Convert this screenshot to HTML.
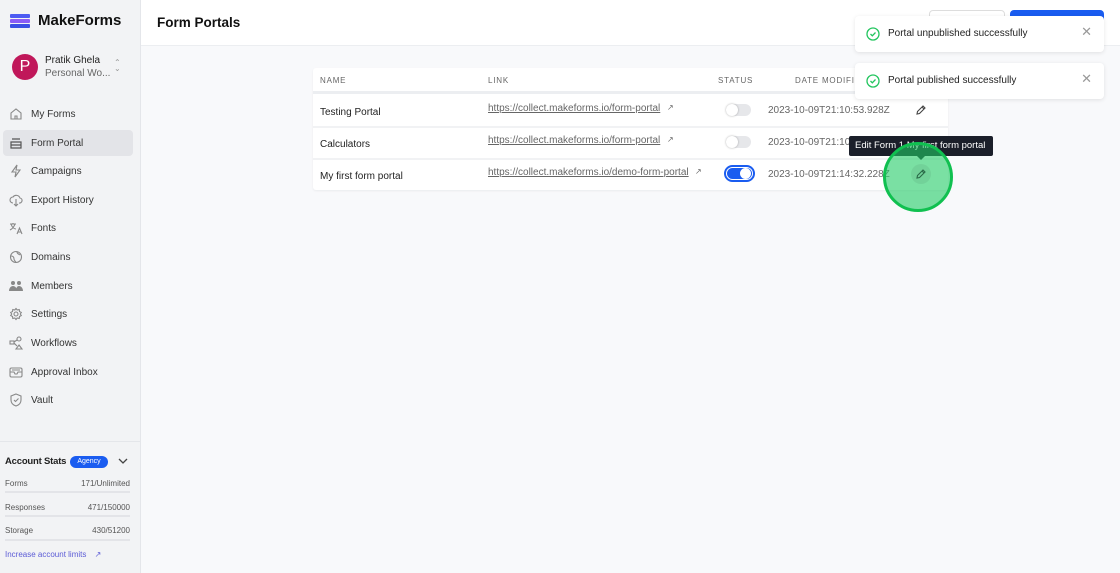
<!DOCTYPE html>
<html><head><meta charset="utf-8"><style>
*{box-sizing:border-box;margin:0;padding:0}
body{width:1120px;height:573px;overflow:hidden;font-family:"Liberation Sans",sans-serif;background:#f8f9fb;position:relative;color:#222}
.sb{position:absolute;left:0;top:0;width:141px;height:573px;background:#f2f3f5;border-right:1px solid #e4e6ea}
.logo{position:absolute;left:10px;top:12px;display:flex;align-items:center;font-weight:bold;font-size:15px;color:#111}
.av{position:absolute;left:12px;top:54px;width:26px;height:26px;border-radius:50%;background:#c0175a;color:#fff;font-size:16px;text-align:center;line-height:26px}
.nm{position:absolute;left:45px;top:55px;font-size:10px;color:#222}
.ws{position:absolute;left:45px;top:68px;font-size:10px;color:#666}
.nav{position:absolute;left:3px;width:130px;height:26px;font-size:10px;color:#333;display:flex;align-items:center}
.nav svg{position:absolute;left:6px;width:14px;height:14px}
.nav span{position:absolute;left:28px}
.act{background:#e3e4e8;border-radius:4px}
.hdr{position:absolute;left:141px;top:0;right:0;height:46px;background:#fff;border-bottom:1px solid #eceef1}
.title{position:absolute;left:157px;top:15px;font-size:13.5px;font-weight:bold;color:#111}
.tbl{position:absolute;left:313px;top:68px;width:635px;height:122px;background:#fff;border-radius:3px;box-shadow:0 1px 2px rgba(0,0,0,.06)}
.th{position:absolute;top:76px;font-size:8px;letter-spacing:.8px;color:#666}
.row{position:absolute;left:313px;width:635px;height:32px;border-top:2px solid #f1f2f4}
.txt{position:absolute;font-size:10px;color:#222}
.lnk{position:absolute;font-size:10px;color:#666;text-decoration:underline}
.dt{position:absolute;left:768px;font-size:10px;color:#666}
.tg{position:absolute;left:726px;width:25px;height:12px;border-radius:6px;background:#e6e7ea}
.tg:after{content:"";position:absolute;left:0;top:0;width:12px;height:12px;border-radius:50%;background:#fff;box-shadow:0 0 2px rgba(0,0,0,.3)}
.toast{position:absolute;left:855px;width:249px;height:36px;background:#fff;border-radius:4px;box-shadow:0 1px 4px rgba(0,0,0,.1);font-size:10px;color:#222}
.toast svg{position:absolute;left:11px;top:11px}
.toast span{position:absolute;left:33px;top:12px}
.toast b{position:absolute;right:12px;top:8px;font-weight:normal;color:#999;font-size:13px}
</style></head><body>
<div class="sb">
<div class="logo"><svg width="20" height="14" viewBox="0 0 20 14"><rect x="0" y="0" width="20" height="4" rx="1" fill="#4d5bf2"/><rect x="0" y="5" width="20" height="4" rx="1" fill="#8b5cf6"/><rect x="0" y="10" width="20" height="4" rx="1" fill="#3b4fe4"/></svg><span style="margin-left:8px">MakeForms</span></div>
<div class="av">P</div><div class="nm">Pratik Ghela</div><div class="ws">Personal Wo...</div>
<div style="position:absolute;left:114px;top:60px;color:#999;font-size:8px;line-height:6px">⌃<br>⌄</div>
<div class="nav" style="top:101px"><svg viewBox="0 0 14 14" fill="none" stroke="#888" stroke-width="1.1"><path d="M2 6L7 2l5 4v6H2z M6 12V9h2v3"/></svg><span>My Forms</span></div>
<div class="nav act" style="top:130px"><svg viewBox="0 0 14 14" fill="none" stroke="#555" stroke-width="1.2"><path d="M3 3h8M2 6h10v6H2zM2 9h10"/></svg><span>Form Portal</span></div>
<div class="nav" style="top:158px"><svg viewBox="0 0 14 14" fill="none" stroke="#888" stroke-width="1.1"><path d="M8 1L3 8h4l-1 5 5-7H7z"/></svg><span>Campaigns</span></div>
<div class="nav" style="top:187px"><svg viewBox="0 0 14 14" fill="none" stroke="#888" stroke-width="1.1"><path d="M4 10a3 3 0 010-6 4 4 0 017 1 2.5 2.5 0 01-1 5M7 6v7M5 11l2 2 2-2"/></svg><span>Export History</span></div>
<div class="nav" style="top:215px"><svg viewBox="0 0 14 14" fill="none" stroke="#888" stroke-width="1.1"><path d="M1 3h6M4 2v1M2 3c1 3 3 5 5 5M6 3c-1 3-3 5-5 6M8 13l2.5-6 2.5 6M9 11h3"/></svg><span>Fonts</span></div>
<div class="nav" style="top:244px"><svg viewBox="0 0 14 14" fill="none" stroke="#888" stroke-width="1.1"><circle cx="7" cy="7" r="5.5"/><path d="M2 6c2 0 3 1 3 3s2 2 2 4M8 2c0 2 2 2 3 3"/></svg><span>Domains</span></div>
<div class="nav" style="top:273px"><svg viewBox="0 0 14 14" fill="#888"><circle cx="4" cy="4" r="2"/><circle cx="10" cy="4" r="2"/><path d="M0 12c0-3 2-5 4-5s4 2 4 5zM7 12c0-3 1-5 3-5s4 2 4 5z"/></svg><span>Members</span></div>
<div class="nav" style="top:301px"><svg viewBox="0 0 14 14" fill="none" stroke="#888" stroke-width="1.1"><circle cx="7" cy="7" r="2"/><path d="M7 1.5l1.2 1.5 2-.5.3 2 1.8 1-1 1.5 1 1.5-1.8 1-.3 2-2-.5L7 12.5 5.8 11l-2 .5-.3-2-1.8-1 1-1.5-1-1.5 1.8-1 .3-2 2 .5z"/></svg><span>Settings</span></div>
<div class="nav" style="top:330px"><svg viewBox="0 0 14 14" fill="none" stroke="#888" stroke-width="1.1"><rect x="1" y="5" width="4" height="3"/><circle cx="10" cy="3" r="2"/><path d="M10 9l3 4H7zM5 6l3-2M5 7l3 3"/></svg><span>Workflows</span></div>
<div class="nav" style="top:359px"><svg viewBox="0 0 14 14" fill="none" stroke="#888" stroke-width="1.1"><rect x="1" y="3" width="12" height="9" rx="1.5"/><path d="M1 7h4l1 2h2l1-2h4M3 5h8"/></svg><span>Approval Inbox</span></div>
<div class="nav" style="top:387px"><svg viewBox="0 0 14 14" fill="none" stroke="#888" stroke-width="1.1"><path d="M7 1l5 2v4c0 3-2 5-5 6-3-1-5-3-5-6V3z M5 7l1.5 1.5L9.5 5.5"/></svg><span>Vault</span></div>
<div style="position:absolute;left:0;top:441px;width:140px;border-top:1px solid #e4e6ea"></div>
<div style="position:absolute;left:5px;top:456px;font-size:9.5px;font-weight:bold;color:#222;letter-spacing:-.2px">Account Stats</div>
<div style="position:absolute;left:70px;top:456px;width:38px;height:12px;border-radius:6px;background:#1a5cf0;color:#fff;font-size:7px;text-align:center;line-height:12px">Agency</div>
<svg style="position:absolute;left:118px;top:458px" width="10" height="7" viewBox="0 0 10 7" fill="none" stroke="#444" stroke-width="1.3"><path d="M1 1l4 4 4-4"/></svg>
<div style="position:absolute;left:5px;top:479px;width:125px;font-size:8px;color:#555">Forms<span style="float:right">171/Unlimited</span></div>
<div style="position:absolute;left:5px;top:491px;width:125px;height:2px;background:#e3e4e8"></div>
<div style="position:absolute;left:5px;top:503px;width:125px;font-size:8px;color:#555">Responses<span style="float:right">471/150000</span></div>
<div style="position:absolute;left:5px;top:515px;width:125px;height:2px;background:#e3e4e8"></div>
<div style="position:absolute;left:5px;top:526px;width:125px;font-size:8px;color:#555">Storage<span style="float:right">430/51200</span></div>
<div style="position:absolute;left:5px;top:539px;width:125px;height:2px;background:#e3e4e8"></div>
<div style="position:absolute;left:5px;top:550px;font-size:8px;color:#5b5bd6">Increase account limits <span style="margin-left:6px">↗</span></div>
</div>
<div class="hdr"></div>
<div class="title">Form Portals</div>
<div style="position:absolute;left:929px;top:10px;width:76px;height:20px;border:1px solid #ddd;border-radius:4px;background:#fff"></div>
<div style="position:absolute;left:1010px;top:10px;width:94px;height:20px;border-radius:4px;background:#1a5cf0"></div>
<div class="tbl"></div>
<div style="position:absolute;left:313px;top:91px;width:635px;height:3px;background:#eceef1"></div>
<div class="th" style="left:320px">NAME</div><div class="th" style="left:488px">LINK</div><div class="th" style="left:718px">STATUS</div><div class="th" style="left:795px">DATE MODIFIE</div>
<div class="row" style="top:126px"></div><div class="row" style="top:158px"></div>
<div class="txt" style="left:320px;top:107px">Testing Portal</div>
<div class="lnk" style="left:488px;top:103px">https://collect.makeforms.io/form-portal</div><div class="txt" style="left:667px;top:103px;font-size:8px;color:#666">↗</div>
<div class="tg" style="top:104px"></div><div class="dt" style="top:105px">2023-10-09T21:10:53.928Z</div>
<svg style="position:absolute;left:915px;top:104px" width="12" height="12" viewBox="0 0 12 12" fill="none" stroke="#444" stroke-width="1.1"><path d="M2 10l.5-2.5L8 2l2 2-5.5 5.5zM7 3l2 2"/></svg>
<div class="txt" style="left:320px;top:139px">Calculators</div>
<div class="lnk" style="left:488px;top:135px">https://collect.makeforms.io/form-portal</div><div class="txt" style="left:667px;top:135px;font-size:8px;color:#666">↗</div>
<div class="tg" style="top:136px"></div><div class="dt" style="top:137px">2023-10-09T21:10</div>
<div class="txt" style="left:320px;top:171px">My first form portal</div>
<div class="lnk" style="left:488px;top:167px">https://collect.makeforms.io/demo-form-portal</div><div class="txt" style="left:695px;top:167px;font-size:8px;color:#666">↗</div>
<div style="position:absolute;left:724px;top:165px;width:31px;height:17px;border:2px solid #1a5cf0;border-radius:9px;background:#fff"><div style="position:absolute;left:1px;top:1px;width:25px;height:11px;border-radius:6px;background:#1a5cf0"></div><div style="position:absolute;left:14px;top:1px;width:11px;height:11px;border-radius:50%;background:#fff"></div></div>
<div class="dt" style="top:169px">2023-10-09T21:14:32.228Z</div>
<div style="position:absolute;left:849px;top:136px;width:144px;height:20px;background:#1b1f2a;border-radius:2px;color:#fff;font-size:9.5px;line-height:20px;padding-left:6px">Edit Form 1 My first form portal</div>
<div style="position:absolute;left:916px;top:155px;border:5px solid transparent;border-top-color:#1b1f2a"></div>
<div style="position:absolute;left:883px;top:142px;width:70px;height:70px;border-radius:50%;background:rgba(34,204,102,.6);border:3px solid #10c050"></div>
<div style="position:absolute;left:911px;top:164px;width:20px;height:20px;border-radius:50%;background:rgba(0,0,0,.06)"></div>
<svg style="position:absolute;left:915px;top:168px" width="12" height="12" viewBox="0 0 12 12" fill="none" stroke="#2a6a48" stroke-width="1.1"><path d="M2 10l.5-2.5L8 2l2 2-5.5 5.5zM7 3l2 2"/></svg>
<div class="toast" style="top:16px"><svg width="14" height="14" viewBox="0 0 14 14" fill="none" stroke="#22c55e" stroke-width="1.3"><circle cx="7" cy="7" r="6"/><path d="M4.5 7l1.8 1.8L9.5 5.5"/></svg><span>Portal unpublished successfully</span><b>✕</b></div>
<div class="toast" style="top:63px"><svg width="14" height="14" viewBox="0 0 14 14" fill="none" stroke="#22c55e" stroke-width="1.3"><circle cx="7" cy="7" r="6"/><path d="M4.5 7l1.8 1.8L9.5 5.5"/></svg><span>Portal published successfully</span><b>✕</b></div>
</body></html>
